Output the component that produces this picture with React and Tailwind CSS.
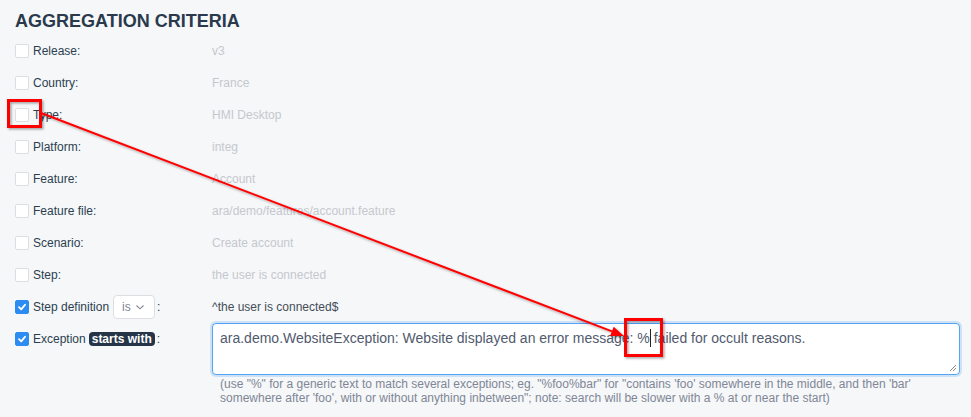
import React from "react";

const rows = [
  ["Release:", "v3"],
  ["Country:", "France"],
  ["Type:", "HMI Desktop"],
  ["Platform:", "integ"],
  ["Feature:", "Account"],
  ["Feature file:", "ara/demo/features/account.feature"],
  ["Scenario:", "Create account"],
  ["Step:", "the user is connected"],
];

function Box({ checked }) {
  if (checked) {
    return (
      <span className="mr-[4px] flex h-[14px] w-[14px] shrink-0 items-center justify-center rounded-[2px] border border-[#2d8cf0] bg-[#2d8cf0]">
        <svg width="10" height="10" viewBox="0 0 10 10">
          <path d="M2 5.2 L4.2 7.3 L8 2.8" fill="none" stroke="#fff" strokeWidth="1.8" strokeLinecap="round" strokeLinejoin="round" />
        </svg>
      </span>
    );
  }
  return <span className="mr-[4px] h-[14px] w-[14px] shrink-0 rounded-[2px] border border-[#dcdee2] bg-white" />;
}

export default function App() {
  return (
    <div className="relative h-[417px] w-[971px] overflow-hidden bg-[#f5f7f9] pl-[15px] pr-[11px] pt-[9px] font-['Liberation_Sans',Arial,sans-serif]">
      <h2 className="h-6 text-[18px] font-bold leading-6 text-[#2a3a4c]">AGGREGATION CRITERIA</h2>
      <div className="mt-[2px] flex flex-col text-[12px]">
        {rows.map(([label, value]) => (
          <div key={label} className="flex h-8 items-center">
            <div className="flex w-[197px] items-center text-[#2c3e50]">
              <Box />
              <span>{label}</span>
            </div>
            <div className="text-[#c5c8ce]">{value}</div>
          </div>
        ))}
        <div className="flex h-8 items-center">
          <div className="flex w-[197px] items-center text-[#2c3e50]">
            <Box checked />
            <span>Step definition</span>
            <span className="ml-[4px] flex h-[24px] w-[42px] items-center rounded-[4px] border border-[#dcdee2] bg-white pl-[8px] text-[#808695]">
              <span>is</span>
              <svg className="ml-[4px]" width="10" height="10" viewBox="0 0 10 10">
                <path d="M1.5 3.5 L5 6.8 L8.5 3.5" fill="none" stroke="#808695" strokeWidth="1.1" />
              </svg>
            </span>
            <span className="ml-[2px]">:</span>
          </div>
          <div className="text-[#464c58]">^the user is connected$</div>
        </div>
        <div className="flex items-start">
          <div className="flex h-8 w-[197px] items-center text-[#2c3e50]">
            <Box checked />
            <span>Exception</span>
            <span className="ml-[3px] rounded-[4px] bg-[#253446] px-[3px] text-[12px] font-bold leading-[14px] text-white">starts with</span>
            <span className="ml-[2px]">:</span>
          </div>
          <div className="flex-1">
            <div className="relative h-[52px] w-full rounded-[4px] border border-[#57a3f3] bg-white px-[7px] py-[4px] text-[14px] leading-[21px] text-[#515a6e] shadow-[0_0_0_2px_rgba(45,140,240,0.2)]">
              ara.demo.WebsiteException: Website displayed an error message: %<span className="mr-[-1px] inline-block h-[18px] w-px bg-[#222] align-[-4px]" /> failed for occult reasons.
              <svg className="absolute bottom-[2px] right-[2px]" width="9" height="9" viewBox="0 0 9 9">
                <path d="M8 2 L2 8 M8 5 L5 8" stroke="#888" strokeWidth="1" />
              </svg>
            </div>
            <div className="mt-[2px] pl-[8px] text-[12px] leading-[14px] text-[#808695]">
              (use "%" for a generic text to match several exceptions; eg. "%foo%bar" for "contains 'foo' somewhere in the middle, and then 'bar'
              <br />
              somewhere after 'foo', with or without anything inbetween"; note: search will be slower with a % at or near the start)
            </div>
          </div>
        </div>
      </div>

      <svg className="pointer-events-none absolute left-0 top-0" width="971" height="417" viewBox="0 0 971 417">
        <defs>
          <filter id="sh" x="-20%" y="-20%" width="140%" height="140%">
            <feDropShadow dx="1.5" dy="1.5" stdDeviation="1.2" floodColor="#000" floodOpacity="0.35" />
          </filter>
        </defs>
        <g filter="url(#sh)">
          <rect x="8.5" y="100.5" width="32" height="26" fill="none" stroke="#f00" strokeWidth="3" />
          <rect x="625.5" y="319.5" width="36" height="36" fill="none" stroke="#f00" strokeWidth="3" />
          <line x1="41" y1="113" x2="612" y2="331.4" stroke="#f00" strokeWidth="2" />
          <polygon points="624,336 613.7,326.7 610.1,336.1" fill="#f00" />
        </g>
      </svg>
    </div>
  );
}
